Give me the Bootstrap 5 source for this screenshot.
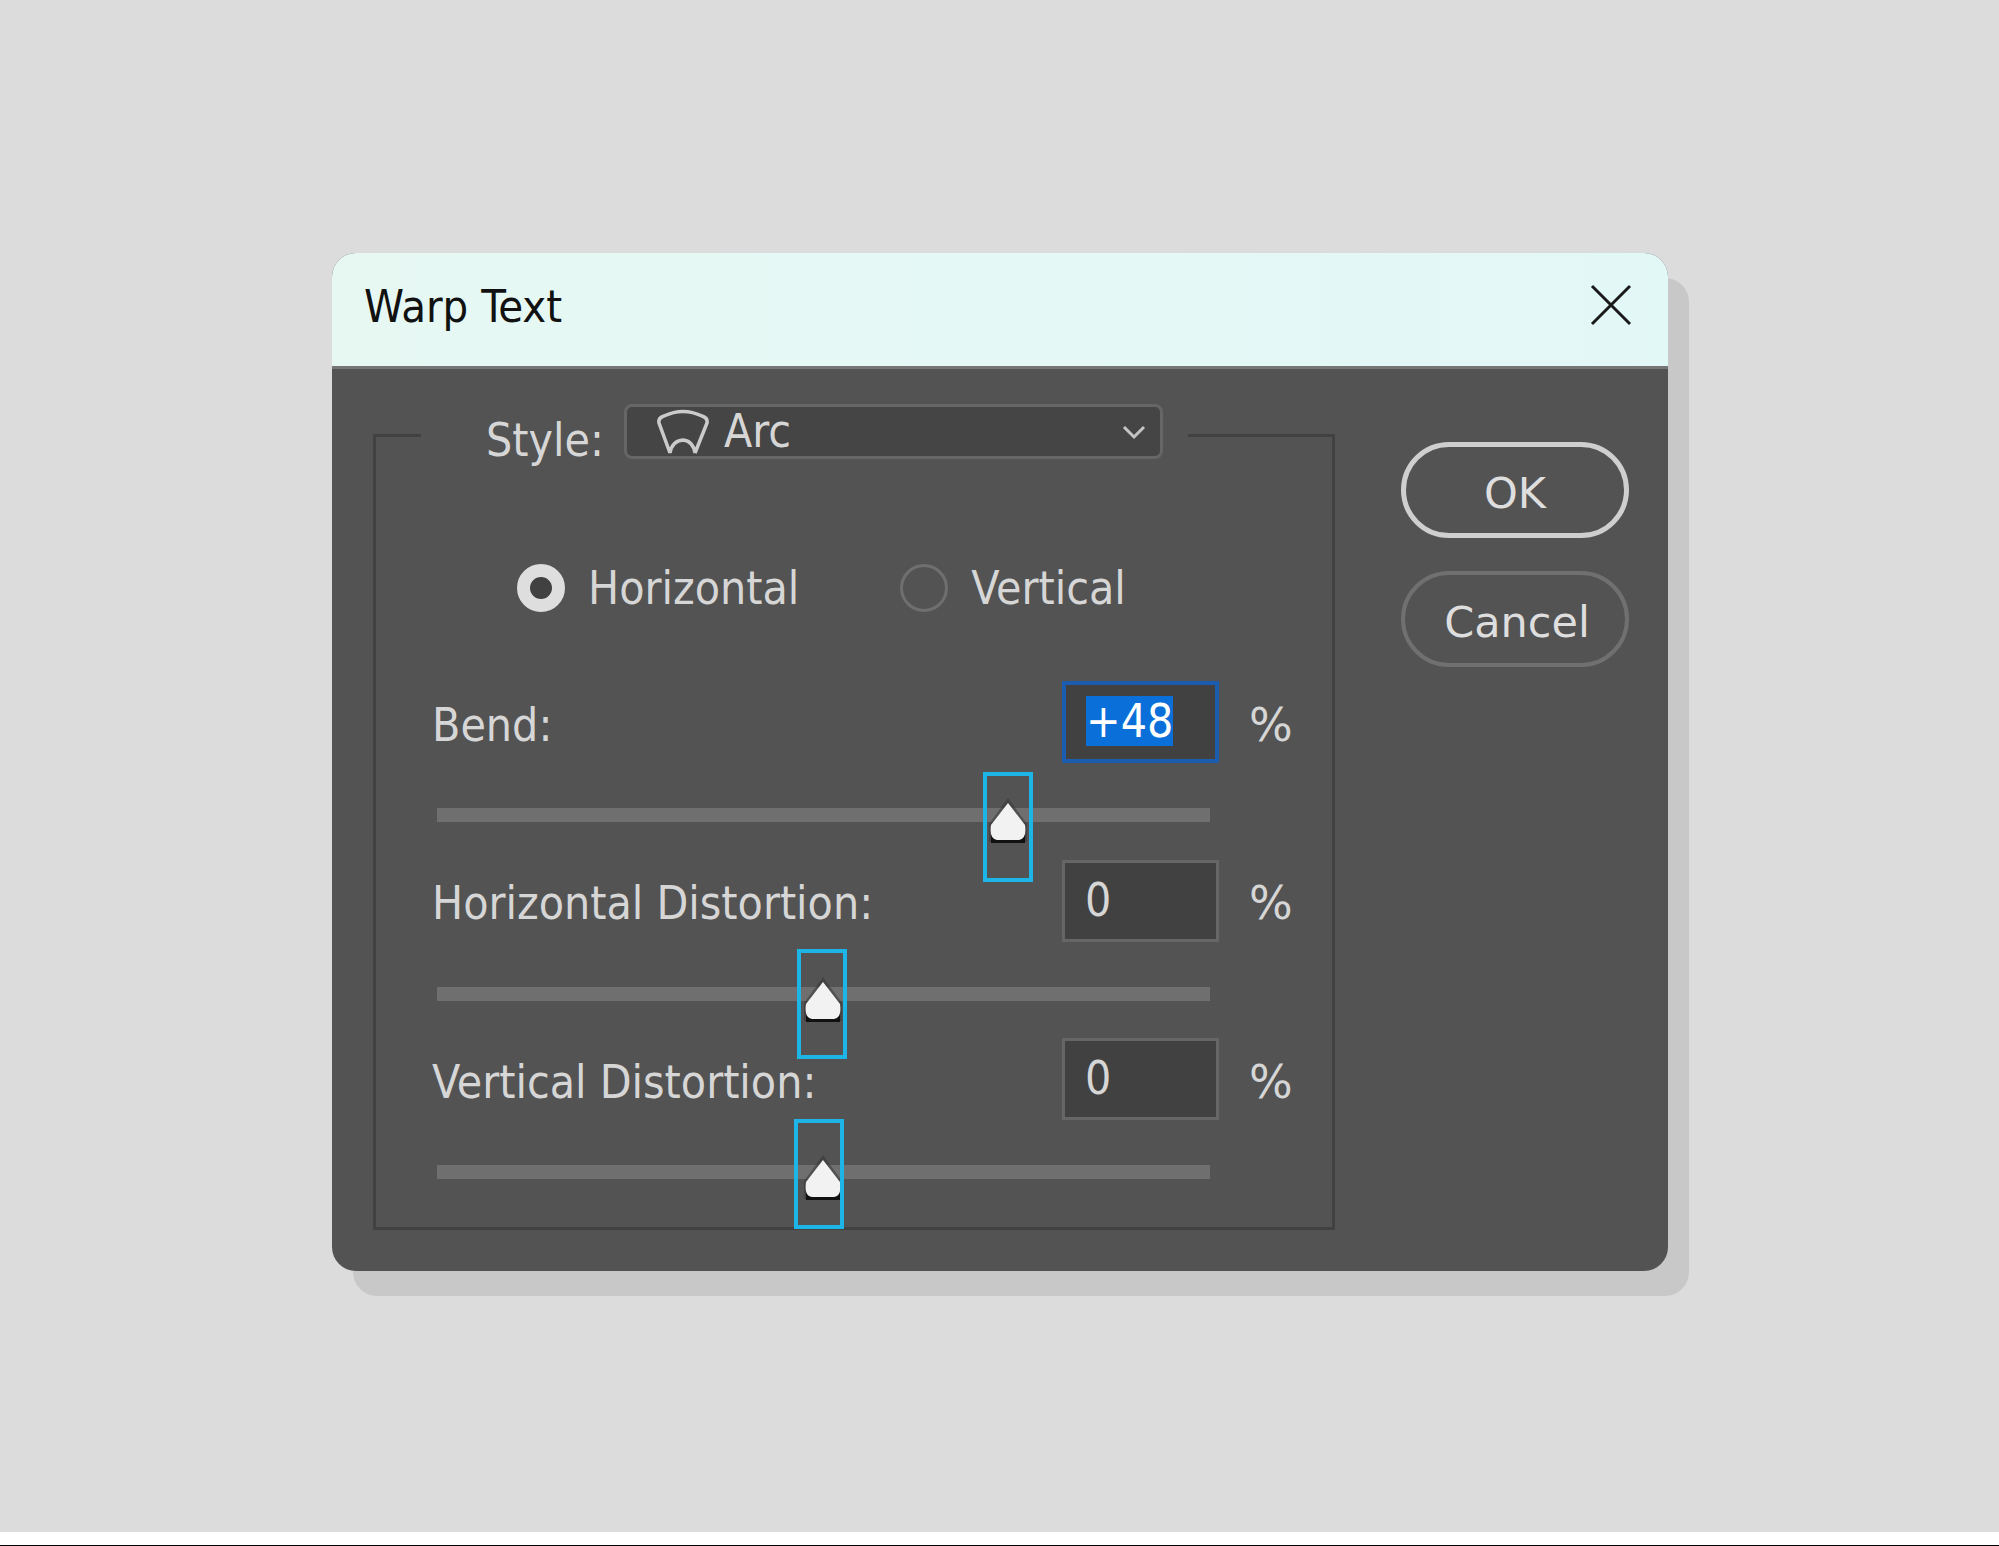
<!DOCTYPE html>
<html lang="en">
<head>
    <meta charset="UTF-8">
    <meta name="viewport" content="width=device-width, initial-scale=1">
    <title>Warp Text</title>
    <link href="https://cdn.jsdelivr.net/npm/bootstrap@5.3.0/dist/css/bootstrap.min.css" rel="stylesheet">
    <style>
        body {
            background: #fff;
            height: 1546px;
            overflow: hidden;
            font-family: "DejaVu Sans", "Liberation Sans", sans-serif;
            font-stretch: condensed;
            font-size: 46px;
            color: #d6d6d6;
        }
        .stage { height: 1532px; background: #dcdcdc; padding: 253px 0 0 332px; }
        .page-end { height: 14px; border-bottom: 1px solid #000; }
        .warp-dialog {
            width: 1336px; height: 1018px;
            background: #535353;
            border-radius: 24px;
            box-shadow: 21px 25px 0 #c8c8c8;
            overflow: hidden;
        }
        .warp-title {
            height: 116px;
            padding: 0 36px 6px 32px;
            background: linear-gradient(90deg, #e7f8f3, #e2f8f7);
            border-bottom: 3px solid #767676;
            color: #111;
            font-size: 45px;
        }
        .warp-title svg { margin-bottom: 4px; }
        .warp-frame {
            width: 962px; height: 796px;
            margin: 65px 0 0 41px;
            border: 3px solid #414141;
        }
        .warp-legend {
            width: 767px; height: 55px;
            margin: -33px 0 0 45px;
            padding: 0 25px 0 65px;
            background: #535353;
        }
        .style-label { width: 138px; padding-top: 2px; }
        .style-select {
            height: 55px;
            padding: 0 13px 0 29px;
            background: #454545;
            border: 3px solid #666;
            border-radius: 8px;
        }
        .style-icon { margin-right: 14px; }
        .radio-row { margin: 105px 0 0 141px; height: 48px; }
        .radio-dot {
            width: 48px; height: 48px;
            margin-right: 23px;
            border-radius: 50%;
            background: #535353;
            border: 3px solid #6f6f6f;
        }
        .radio-dot.is-on { background: #414141; border: 13px solid #dedede; }
        .radio-gap { width: 101px; }
        .slide-list { margin-top: 69px; padding-left: 56px; }
        .slide-block { height: 178.5px; }
        .slide-label { width: 630px; padding-top: 6px; }
        .slide-input {
            width: 157px; height: 82px;
            padding: 0 0 2px 20px;
            background: #414141;
            border: 3px solid #666;
        }
        .slide-input.is-focus { border: 4px solid #1c5cae; }
        .slide-input span { line-height: 50px; }
        .slide-input .is-picked { background: #0a6fd8; color: #fff; }
        .slide-unit { margin-left: 30px; padding-top: 6px; font-stretch: normal; }
        .slide-track {
            width: 773px; height: 14px;
            margin: 45px 0 37.5px 5px;
            background: #6f6f6f;
        }
        .slide-thumb { position: absolute; top: -10px; width: 38px; height: 48px; }
        .slide-mark { position: absolute; width: 50px; height: 110px; border: 4px solid #1db4e8; }
        .warp-side { margin: 73px 0 0 66px; }
        .warp-btn {
            width: 228px; height: 96px;
            margin-bottom: 33px;
            border-radius: 48px;
            border: 5px solid #cfcfcf;
            color: #dedede;
            background: transparent;
            font-size: 43px;
            line-height: 1;
            padding-top: 8px;
        }
        .warp-btn.is-plain { border: 4px solid #707070; padding-left: 10px; }
    </style>
</head>
<body>

<div class="stage">
    <div class="warp-dialog">
        <div class="warp-title d-flex align-items-center justify-content-between">
            <span>Warp Text</span>
            <svg width="42" height="42" viewBox="0 0 42 42"><path d="M2 2 L40 40 M40 2 L2 40" stroke="#1a1a1a" stroke-width="3" fill="none"/></svg>
        </div>

        <div class="d-flex">
            <div class="warp-frame">
                <div class="warp-legend d-flex">
                    <div class="style-label">Style:</div>
                    <div class="style-select flex-grow-1 d-flex align-items-center">
                        <svg width="54" height="48" viewBox="0 0 54 48" class="style-icon"><path d="M14 45 L3 15 Q2 10 8 8 Q27 -1 46 8 Q52 10 51 15 L39 45 M14 45 Q16 33 27 32 Q37 33 39 45" stroke="#cbcbcb" stroke-width="3.5" fill="none"/></svg>
                        <span class="flex-grow-1">Arc</span>
                        <svg width="26" height="16" viewBox="0 0 26 16"><path d="M3 3 L13 13 L23 3" stroke="#c4c4c4" stroke-width="3" fill="none"/></svg>
                    </div>
                </div>

                <div class="radio-row d-flex align-items-center">
                    <div class="radio-dot is-on"></div>
                    <span>Horizontal</span>
                    <div class="radio-gap"></div>
                    <div class="radio-dot"></div>
                    <span>Vertical</span>
                </div>

                <div class="slide-list">
                    <div class="slide-block">
                        <div class="d-flex align-items-center">
                            <div class="slide-label">Bend:</div>
                            <div class="slide-input is-focus d-flex align-items-center"><span class="is-picked">+48</span></div>
                            <div class="slide-unit">%</div>
                        </div>
                        <div class="slide-track position-relative">
                            <svg class="slide-thumb" style="left: 552px" viewBox="0 0 38 48"><path d="M19 0 L38 26 L38 44 L0 44 L0 26 Z" fill="#333" opacity=".5"/><path d="M2 36 H36 V45 H2 Z" fill="#111"/><path d="M19 5 L36 27 Q38 41 30 42 L8 42 Q0 41 2 27 Z" fill="#f2f2f2"/></svg>
                            <div class="slide-mark" style="left: 546px; top: -36px"></div>
                        </div>
                    </div>
                    <div class="slide-block">
                        <div class="d-flex align-items-center">
                            <div class="slide-label">Horizontal Distortion:</div>
                            <div class="slide-input d-flex align-items-center"><span>0</span></div>
                            <div class="slide-unit">%</div>
                        </div>
                        <div class="slide-track position-relative">
                            <svg class="slide-thumb" style="left: 367px" viewBox="0 0 38 48"><path d="M19 0 L38 26 L38 44 L0 44 L0 26 Z" fill="#333" opacity=".5"/><path d="M2 36 H36 V45 H2 Z" fill="#111"/><path d="M19 5 L36 27 Q38 41 30 42 L8 42 Q0 41 2 27 Z" fill="#f2f2f2"/></svg>
                            <div class="slide-mark" style="left: 360px; top: -38px"></div>
                        </div>
                    </div>
                    <div class="slide-block">
                        <div class="d-flex align-items-center">
                            <div class="slide-label">Vertical Distortion:</div>
                            <div class="slide-input d-flex align-items-center"><span>0</span></div>
                            <div class="slide-unit">%</div>
                        </div>
                        <div class="slide-track position-relative">
                            <svg class="slide-thumb" style="left: 367px" viewBox="0 0 38 48"><path d="M19 0 L38 26 L38 44 L0 44 L0 26 Z" fill="#333" opacity=".5"/><path d="M2 36 H36 V45 H2 Z" fill="#111"/><path d="M19 5 L36 27 Q38 41 30 42 L8 42 Q0 41 2 27 Z" fill="#f2f2f2"/></svg>
                            <div class="slide-mark" style="left: 357px; top: -46px"></div>
                        </div>
                    </div>
                </div>
            </div>

            <div class="warp-side d-flex flex-column">
                <button class="warp-btn" type="button">OK</button>
                <button class="warp-btn is-plain" type="button">Cancel</button>
            </div>
        </div>
    </div>
</div>
<div class="page-end"></div>

<script src="https://cdn.jsdelivr.net/npm/bootstrap@5.3.0/dist/js/bootstrap.bundle.min.js"></script>
</body>
</html>
